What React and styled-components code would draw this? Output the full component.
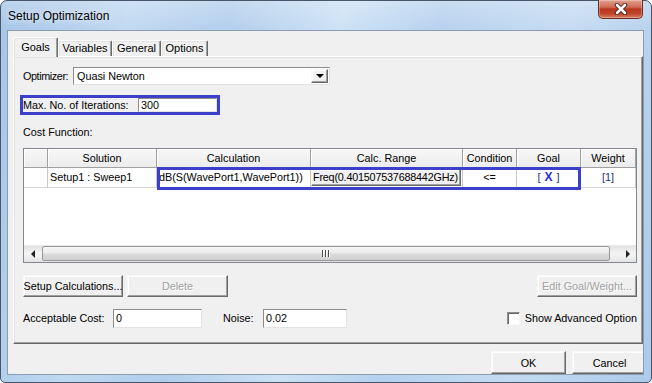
import React from 'react';
import styled, { createGlobalStyle, css } from 'styled-components';

const GlobalStyle = createGlobalStyle`
  html, body { margin: 0; padding: 0; overflow: hidden; background: #fff; }
  body {
    font-family: "Liberation Sans", Arial, sans-serif;
    font-size: 10.8px;
    color: #000;
  }
`;

const BLUE = '#3b3fc9';

const Window = styled.div`
  width: 652px;
  height: 383px;
  box-sizing: border-box;
  display: flex;
  flex-direction: column;
  padding: 0 7px 7px 6px;
  border: 1px solid #48566a;
  border-radius: 7px 7px 5px 5px;
  background:
    linear-gradient(180deg, rgba(255,255,255,0.25), rgba(255,255,255,0) 30px),
    linear-gradient(100deg, #a6c5e7 0%, #c0d8f1 18%, #b2ceec 32%, #cce1f5 48%, #b6d1ee 62%, #c5dbf2 80%, #adcaeb 100%);
`;

const TitleBar = styled.div`
  height: 29px;
  display: flex;
  justify-content: space-between;
  align-items: flex-start;
`;

const Title = styled.div`
  padding: 8px 0 0 1px;
  font-size: 12px;
  color: #000;
  text-shadow: 0 0 6px rgba(255,255,255,0.9);
`;

const CloseButton = styled.div`
  width: 45px;
  height: 19px;
  margin: -1px 1px 0 0;
  box-sizing: border-box;
  display: flex;
  align-items: center;
  justify-content: center;
  border: 1px solid #6b2a1e;
  border-top: none;
  border-radius: 0 0 5px 5px;
  background: linear-gradient(180deg, #e3a08f 0%, #cf6a55 40%, #b8371f 50%, #bf4328 75%, #d97c5e 100%);
  box-shadow: inset 0 0 0 1px rgba(255,255,255,0.3);
`;

const Client = styled.div`
  flex: 1;
  min-height: 0;
  display: flex;
  flex-direction: column;
  overflow: hidden;
  background: #f0f0f0;
  border: 1px solid #8a9bb2;
`;

const TabStrip = styled.div`
  height: 25px;
  display: flex;
  align-items: flex-end;
  padding-left: 5px;
  position: relative;
  z-index: 1;
`;

const Tab = styled.div`
  width: ${p => p.$w}px;
  height: ${p => (p.$active ? 20 : 16)}px;
  margin-bottom: ${p => (p.$active ? -1 : 0)}px;
  box-sizing: border-box;
  display: flex;
  align-items: ${p => (p.$active ? 'flex-start' : 'center')};
  padding-top: ${p => (p.$active ? 3 : 0)}px;
  justify-content: center;
  font-size: 11px;
  background: #f0f0f0;
  border-top: 1px solid #fff;
  border-left: 1px solid #fff;
  border-right: 1px solid #696969;
  border-radius: 2px 2px 0 0;
  box-shadow: inset -1px 0 #a0a0a0, inset 1px 1px #e3e3e3;
`;

const Panel = styled.div`
  height: 292px;
  margin-left: 5px;
  box-sizing: border-box;
  padding: 10px 5px 0 9px;
  display: flex;
  flex-direction: column;
  border: 1px solid;
  border-color: #fff #696969 #696969 #fff;
  box-shadow: inset -1px -1px #a0a0a0, inset 1px 1px #e3e3e3;
`;

const Row = styled.div`
  display: flex;
  align-items: center;
  height: ${p => p.$h || 18}px;
  margin-top: ${p => p.$mt || 0}px;
`;

const Label = styled.span`
  width: ${p => (p.$w ? `${p.$w}px` : 'auto')};
  flex: none;
  white-space: nowrap;
  letter-spacing: ${p => p.$tight || 0}px;
`;

const Sunken = css`
  box-sizing: border-box;
  background: #fff;
  border: 1px solid;
  border-color: #8c8c8c #e3e3e3 #e3e3e3 #8c8c8c;
`;

const Select = styled.div`
  ${Sunken}
  width: 257px;
  height: 18px;
  display: flex;
  align-items: center;
  justify-content: space-between;
  padding: 0 1px 0 3px;
`;

const Raised = css`
  box-sizing: border-box;
  background: #f0f0f0;
  border: 1px solid;
  border-color: #f8f8f8 #696969 #696969 #f8f8f8;
  box-shadow: inset -1px -1px #a0a0a0, inset 1px 1px #fff;
`;

const DropButton = styled.div`
  ${Raised}
  width: 17px;
  height: 14px;
  display: flex;
  align-items: center;
  justify-content: center;
  &::before {
    content: '';
    border-left: 4px solid transparent;
    border-right: 4px solid transparent;
    border-top: 4px solid #000;
    margin-top: 1px;
  }
`;

const MaxBox = styled.div`
  width: 200px;
  height: 20px;
  margin: 10px 0 0 -3px;
  box-sizing: border-box;
  border: 3px solid ${BLUE};
  display: flex;
  align-items: center;
`;

const TextInput = styled.div`
  ${Sunken}
  width: ${p => p.$w}px;
  height: ${p => p.$h || 19}px;
  display: flex;
  align-items: center;
  padding-left: 2px;
`;

const SectionLabel = styled.div`
  margin-top: 10px;
  line-height: 14px;
`;

const Grid = styled.div`
  width: 614px;
  height: 115px;
  margin-top: 9px;
  box-sizing: border-box;
  border: 1px solid #828790;
  background: #fff;
  display: flex;
  flex-direction: column;
`;

const GridRow = styled.div`
  display: flex;
  height: ${p => p.$h}px;
  flex: none;
`;

const HeadCell = styled.div`
  width: ${p => p.$w}px;
  flex: none;
  box-sizing: border-box;
  display: flex;
  align-items: center;
  justify-content: center;
  background: linear-gradient(#f7f7f7, #ececec);
  border-right: 1px solid #a0a0a0;
  border-bottom: 1px solid #a0a0a0;
  box-shadow: inset 1px 1px #fff;
  white-space: nowrap;
`;

const Cell = styled.div`
  width: ${p => p.$w}px;
  flex: none;
  box-sizing: border-box;
  display: flex;
  align-items: center;
  justify-content: ${p => (p.$align ? p.$align : 'flex-start')};
  padding: 0 ${p => (p.$align || p.$flush ? 0 : 2)}px;
  border-right: 1px solid #c8c8c8;
  border-bottom: 1px solid #d8d8d8;
  white-space: nowrap;
  overflow: hidden;
`;

const Highlight = styled.div`
  display: flex;
  position: relative;
  &::after {
    content: '';
    position: absolute;
    left: 0;
    right: 0;
    top: -1px;
    bottom: -2px;
    border: 3px solid ${BLUE};
    pointer-events: none;
  }
`;

const RangeButton = styled.div`
  ${Raised}
  height: 17px;
  width: 150px;
  display: flex;
  align-items: center;
  padding-left: 1px;
  letter-spacing: -0.2px;
`;

const Bracket = styled.span`
  color: #1f2e8a;
`;

const BigX = styled.span`
  color: #2b2fd0;
  font-weight: bold;
  font-size: 12px;
  margin: 0 4px;
`;

const Filler = styled.div`
  flex: 1;
`;

const ScrollBar = styled.div`
  height: 16px;
  flex: none;
  display: flex;
  align-items: center;
  background: linear-gradient(#e3e3e3, #f2f2f2 40%, #f2f2f2 60%, #e3e3e3);
  border-top: 1px solid #e8e8e8;
`;

const ScrollArrow = styled.div`
  width: 17px;
  height: 100%;
  flex: none;
  display: flex;
  align-items: center;
  justify-content: center;
  &::before {
    content: '';
    border-top: 4px solid transparent;
    border-bottom: 4px solid transparent;
    ${p => (p.$dir === 'left' ? 'border-right: 4px solid #222;' : 'border-left: 4px solid #222;')}
  }
`;

const Thumb = styled.div`
  width: ${p => p.$w}px;
  height: 15px;
  margin-left: 1px;
  box-sizing: border-box;
  border: 1px solid #979797;
  border-radius: 2px;
  background: linear-gradient(#f6f6f6, #ebebeb 45%, #dbdbdb 55%, #d0d0d0);
  display: flex;
  align-items: center;
  justify-content: center;
  gap: 1px;
`;

const Grip = styled.span`
  width: 1px;
  height: 7px;
  background: #4a4a4a;
  box-shadow: 1px 0 #fff;
  margin-right: 1px;
`;

const Track = styled.div`
  flex: 1;
`;

const Button = styled.div`
  ${Raised}
  width: ${p => p.$w}px;
  height: ${p => p.$h || 22}px;
  flex: none;
  display: flex;
  align-items: center;
  justify-content: center;
  white-space: nowrap;
  color: ${p => (p.$disabled ? '#a0a0a0' : '#000')};
  text-shadow: ${p => (p.$disabled ? '1px 1px #fff' : 'none')};
  margin-left: ${p => (p.$push ? 'auto' : '0')};
`;

const ButtonRow = styled.div`
  display: flex;
  gap: 4px;
  margin-top: 12px;
  height: 22px;
`;

const CheckWrap = styled.label`
  margin-left: auto;
  display: flex;
  align-items: center;
  gap: 5px;
  white-space: nowrap;
`;

const CheckBox = styled.span`
  ${Sunken}
  width: 13px;
  height: 13px;
  border-color: #8c8c8c #f8f8f8 #f8f8f8 #8c8c8c;
  box-shadow: inset 1px 1px #696969;
`;

const Footer = styled.div`
  display: flex;
  justify-content: flex-end;
  gap: 6px;
  padding-top: 7px;
  margin-right: -4px;
`;

const cols = { row: 24, solution: 109, calc: 154, range: 152, cond: 54, goal: 64, weight: 55 };

function CloseGlyph() {
  return (
    <svg width="14" height="12" viewBox="0 0 14 12">
      <path d="M3 2 L11 10 M11 2 L3 10" stroke="#4a1a12" strokeWidth="4.4" strokeLinecap="round" />
      <path d="M3 2 L11 10 M11 2 L3 10" stroke="#fff" strokeWidth="2.6" strokeLinecap="round" />
    </svg>
  );
}

export default function App() {
  return (
    <>
      <GlobalStyle />
      <Window>
        <TitleBar>
          <Title>Setup Optimization</Title>
          <CloseButton><CloseGlyph /></CloseButton>
        </TitleBar>
        <Client>
          <TabStrip>
            <Tab $active $w={45}>Goals</Tab>
            <Tab $w={54}>Variables</Tab>
            <Tab $w={49}>General</Tab>
            <Tab $w={47}>Options</Tab>
          </TabStrip>
          <Panel>
            <Row>
              <Label $w={50} $tight={-0.4}>Optimizer:</Label>
              <Select>
                <span>Quasi Newton</span>
                <DropButton />
              </Select>
            </Row>
            <MaxBox>
              <Label $w={115}>Max. No. of Iterations:</Label>
              <TextInput $w={80} $h={14}>300</TextInput>
            </MaxBox>
            <SectionLabel>Cost Function:</SectionLabel>
            <Grid>
              <GridRow $h={19}>
                <HeadCell $w={cols.row} />
                <HeadCell $w={cols.solution}>Solution</HeadCell>
                <HeadCell $w={cols.calc}>Calculation</HeadCell>
                <HeadCell $w={cols.range}>Calc. Range</HeadCell>
                <HeadCell $w={cols.cond}>Condition</HeadCell>
                <HeadCell $w={cols.goal}>Goal</HeadCell>
                <HeadCell $w={cols.weight}>Weight</HeadCell>
              </GridRow>
              <GridRow $h={20}>
                <Cell $w={cols.row} />
                <Cell $w={cols.solution}>Setup1 : Sweep1</Cell>
                <Highlight>
                  <Cell $w={cols.calc}>dB(S(WavePort1,WavePort1))</Cell>
                  <Cell $w={cols.range} $flush>
                    <RangeButton>Freq(0.401507537688442GHz)</RangeButton>
                  </Cell>
                  <Cell $w={cols.cond} $align="center">&lt;=</Cell>
                  <Cell $w={cols.goal} $align="center">
                    <Bracket>[</Bracket><BigX>X</BigX><Bracket>]</Bracket>
                  </Cell>
                </Highlight>
                <Cell $w={cols.weight} $align="center"><Bracket>[1]</Bracket></Cell>
              </GridRow>
              <Filler />
              <ScrollBar>
                <ScrollArrow $dir="left" />
                <Thumb $w={568}>
                  <Grip /><Grip /><Grip />
                </Thumb>
                <Track />
                <ScrollArrow $dir="right" />
              </ScrollBar>
            </Grid>
            <ButtonRow>
              <Button $w={100}>Setup Calculations...</Button>
              <Button $w={101} $disabled>Delete</Button>
              <Button $w={100} $disabled $push>Edit Goal/Weight...</Button>
            </ButtonRow>
            <Row $h={19} $mt={12}>
              <Label $w={90}>Acceptable Cost:</Label>
              <TextInput $w={89}>0</TextInput>
              <Label $w={40} style={{ marginLeft: 21 }}>Noise:</Label>
              <TextInput $w={84}>0.02</TextInput>
              <CheckWrap>
                <CheckBox />
                Show Advanced Option
              </CheckWrap>
            </Row>
          </Panel>
          <Footer>
            <Button $w={75} $h={23}>OK</Button>
            <Button $w={75} $h={23}>Cancel</Button>
          </Footer>
        </Client>
      </Window>
    </>
  );
}
